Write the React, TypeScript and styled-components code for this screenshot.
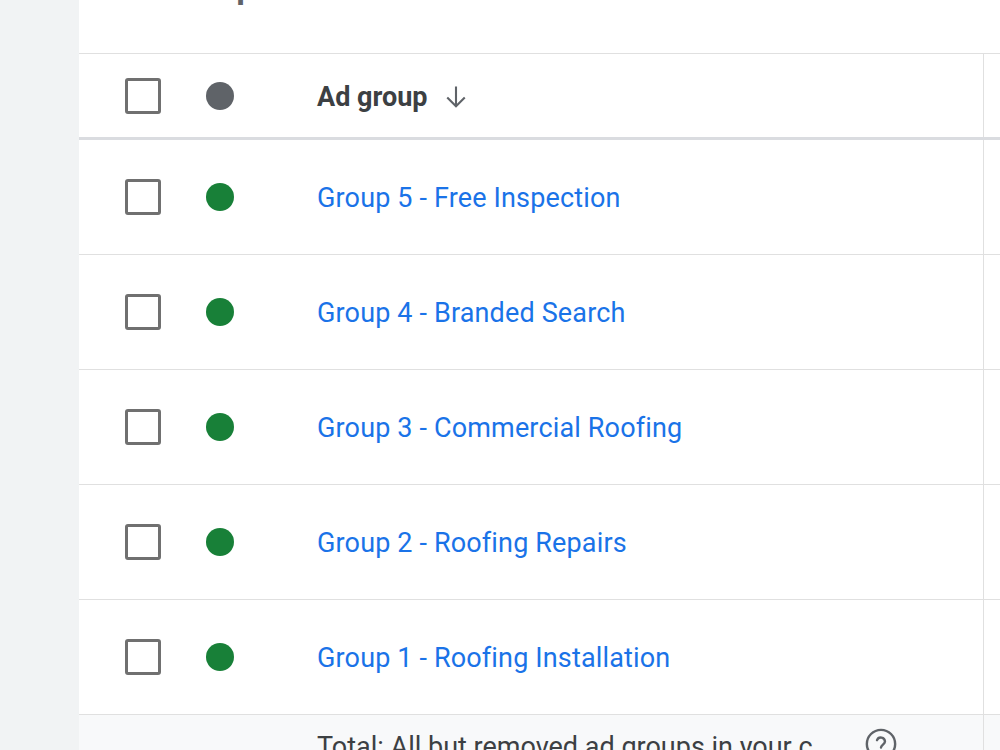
import React from "react";
import styled, { createGlobalStyle } from "styled-components";

const GlobalStyle = createGlobalStyle`
  html, body {
    margin: 0;
    padding: 0;
    background: #f1f3f4;
    font-family: Roboto, "Noto Sans", Arial, sans-serif;
  }
`;

const Page = styled.div`
  display: flex;
  width: 1000px;
  height: 750px;
  overflow: hidden;
`;

const Side = styled.div`
  width: 79px;
  flex: none;
  background: #f1f3f4;
`;

const Main = styled.main`
  flex: 1;
  background: #fff;
  display: flex;
  flex-direction: column;
  overflow: hidden;
`;

const TitleBar = styled.div`
  height: 53px;
  flex: none;
  border-bottom: 1px solid #e0e0e0;
  overflow: hidden;
  display: flex;
  padding-left: 71px;
  gap: 120px;
`;

const Title = styled.span`
  font-size: 40px;
  font-weight: 500;
  color: #5f6368;
  line-height: 40px;
  margin-top: -36px;
  white-space: nowrap;
`;

const SubTitle = styled.span`
  font-size: 28px;
  color: #dadce0;
  line-height: 28px;
  margin-top: -25px;
  white-space: nowrap;
`;

const Row = styled.div<{ $head?: boolean }>`
  display: flex;
  flex: none;
  height: ${(p) => (p.$head ? "83px" : "114px")};
  border-bottom: ${(p) => (p.$head ? "3px solid #dadce0" : "1px solid #e0e0e0")};
`;

const MainCell = styled.div`
  width: 905px;
  flex: none;
  border-right: 1px solid #e0e0e0;
  display: flex;
  align-items: center;
  padding-left: 46px;
  box-sizing: border-box;
`;

const Rest = styled.div`
  flex: 1;
`;

const Checkbox = styled.span`
  width: 36px;
  height: 36px;
  box-sizing: border-box;
  border: 3px solid #707070;
  border-radius: 3px;
  flex: none;
`;

const Dot = styled.span<{ $color: string }>`
  width: 28px;
  height: 28px;
  border-radius: 50%;
  background: ${(p) => p.$color};
  margin-left: 45px;
  flex: none;
`;

const HeadLabel = styled.span`
  margin-left: 83px;
  font-size: 27px;
  font-weight: 700;
  color: #3c4043;
  display: flex;
  align-items: center;
  gap: 14px;
  margin-top: 2px;
`;

const GroupLink = styled.a`
  margin-left: 83px;
  margin-top: 2px;
  font-size: 27px;
  letter-spacing: 0.15px;
  color: #1a73e8;
  text-decoration: none;
  white-space: nowrap;
`;

const Footer = styled.div`
  flex: 1;
  display: flex;
  background: #f8f9fa;
`;

const FooterCell = styled(MainCell)`
  align-items: flex-start;
  padding-left: 238px;
  padding-top: 12px;
  gap: 30px;
`;

const FooterText = styled.span`
  font-size: 27px;
  color: #3c4043;
  white-space: nowrap;
  margin-top: 4px;
`;

const groups = [
  "Group 5 - Free Inspection",
  "Group 4 - Branded Search",
  "Group 3 - Commercial Roofing",
  "Group 2 - Roofing Repairs",
  "Group 1 - Roofing Installation",
];

export default function App() {
  return (
    <>
      <GlobalStyle />
      <Page>
        <Side />
        <Main>
          <TitleBar>
            <Title>Groups</Title>
            <SubTitle>Overview</SubTitle>
          </TitleBar>
          <Row $head>
            <MainCell>
              <Checkbox />
              <Dot $color="#5f6368" />
              <HeadLabel>
                Ad group
                <svg width="28" height="28" viewBox="0 0 24 24" fill="none" stroke="#5f6368" strokeWidth="1.8">
                  <path d="M12 3v17M4.5 12.5l7.5 7.5 7.5-7.5" />
                </svg>
              </HeadLabel>
            </MainCell>
            <Rest />
          </Row>
          {groups.map((g) => (
            <Row key={g}>
              <MainCell>
                <Checkbox />
                <Dot $color="#188038" />
                <GroupLink href="#">{g}</GroupLink>
              </MainCell>
              <Rest />
            </Row>
          ))}
          <Footer>
            <FooterCell>
              <FooterText>Total: All but removed ad groups in your c...</FooterText>
              <svg width="34" height="34" viewBox="0 0 24 24" fill="none" stroke="#5f6368" strokeWidth="1.7">
                <circle cx="12" cy="12" r="10" />
                <path d="M9.2 9.3a2.9 2.9 0 0 1 5.6 1c0 1.9-2.8 2.4-2.8 4.2" strokeLinecap="round" />
                <circle cx="12" cy="17.6" r="0.6" fill="#5f6368" />
              </svg>
            </FooterCell>
            <Rest />
          </Footer>
        </Main>
      </Page>
    </>
  );
}
